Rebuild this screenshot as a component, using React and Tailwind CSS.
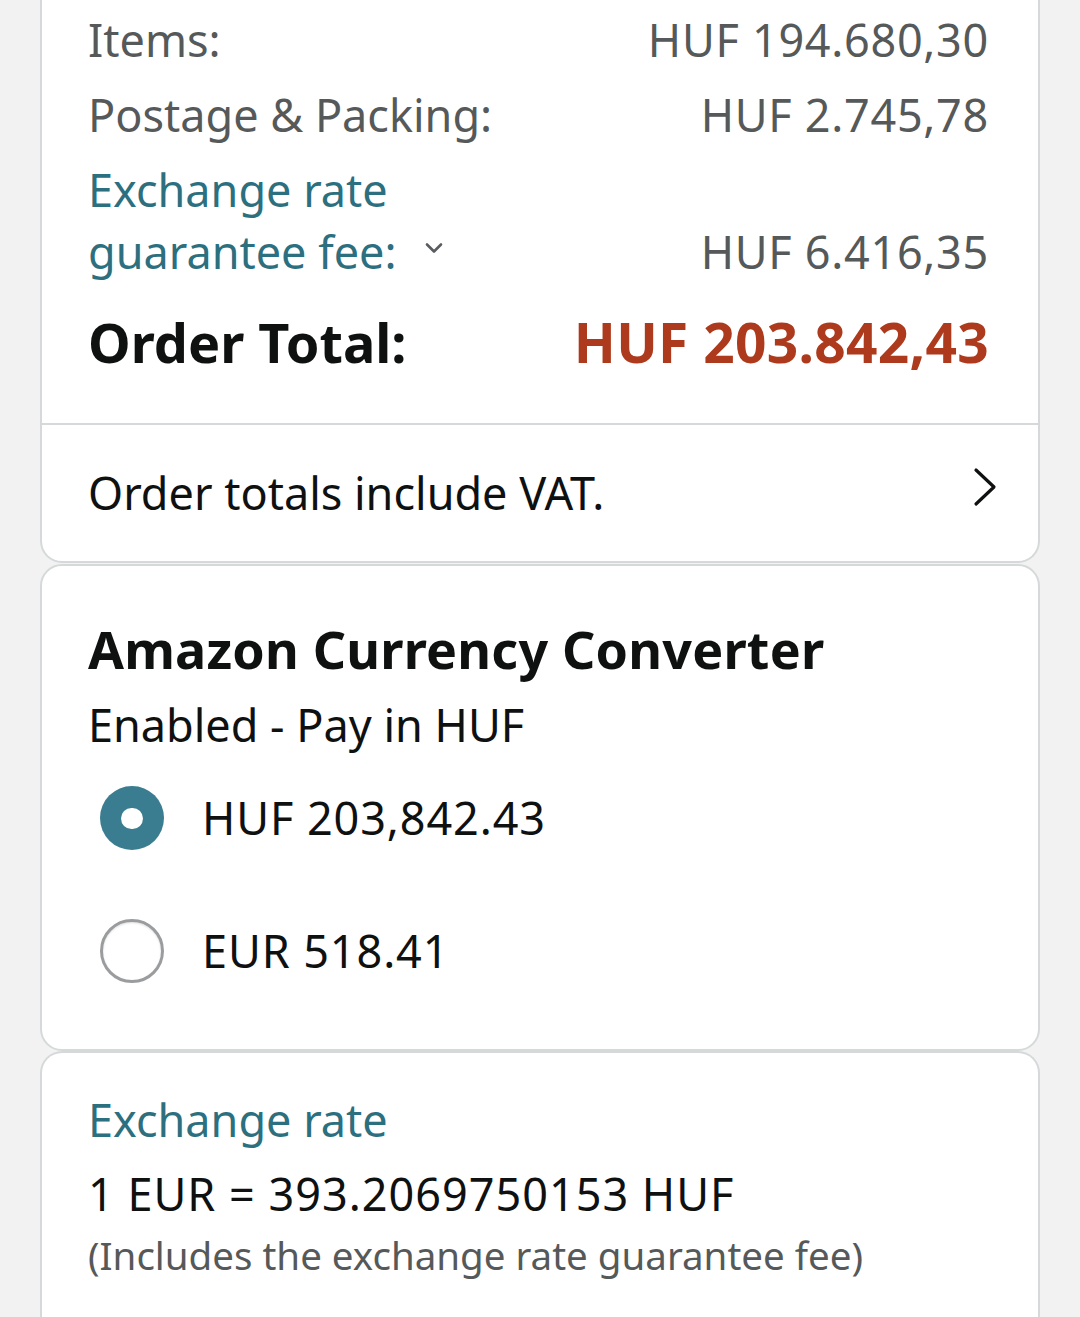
import React from "react";

const F = "font-['Noto_Sans',sans-serif]";

function Row({ label, value }) {
  return (
    <div className="flex items-end justify-between h-[62px] leading-[62px] text-[45px] text-[#565959]">
      <span>{label}</span>
      <span className="tracking-[0.7px]">{value}</span>
    </div>
  );
}

function Radio({ checked, label }) {
  return (
    <div className="flex items-center h-[64px]">
      <div className="w-[114px] pl-[12px] flex items-center">
        {checked ? (
          <div className="w-[64px] h-[64px] rounded-full bg-[#3a7d91] flex items-center justify-center">
            <div className="w-[22px] h-[21px] rounded-full bg-white" />
          </div>
        ) : (
          <div className="w-[64px] h-[64px] rounded-full border-[3px] border-[#9a9c9e] bg-white shadow-[inset_0_1px_2px_rgba(0,0,0,0.12)]" />
        )}
      </div>
      <span className="text-[45px] leading-[62px] text-[#0f1111] tracking-[0.9px]">{label}</span>
    </div>
  );
}

export default function App() {
  return (
    <div className={`${F} h-[1317px] overflow-hidden bg-[#f2f2f2] px-[40px]`}>
      {/* Card 1 */}
      <div className="bg-white border-x-2 border-b-2 border-[#d5d9d9] rounded-b-[22px]">
        <div className="pl-[46px] pr-[49px] pt-[9px] pb-[46px] flex flex-col">
          <Row label="Items:" value="HUF 194.680,30" />
          <div className="h-[13px]" />
          <Row label="Postage & Packing:" value="HUF 2.745,78" />
          <div className="h-[13px]" />
          <div className="flex items-end justify-between text-[45px] leading-[62px]">
            <div className="text-[#2c6f7f] flex flex-col">
              <span>Exchange rate</span>
              <span className="flex items-center">
                guarantee fee:
                <svg className="ml-[29px] -mt-[8px]" width="18" height="12" viewBox="0 0 18 12" fill="none">
                  <path d="M2 2.5 L9 9.5 L16 2.5" stroke="#5a5d5f" strokeWidth="2.6" strokeLinecap="round" strokeLinejoin="round" />
                </svg>
              </span>
            </div>
            <span className="text-[#565959] tracking-[0.7px]">HUF 6.416,35</span>
          </div>
          <div className="h-[24px]" />
          <div className="flex items-center justify-between h-[70px] font-bold">
            <span className="text-[54px] leading-[70px] text-[#0f1111]">Order Total:</span>
            <span className="text-[55px] leading-[70px] text-[#ad3a1c] tracking-[0.3px]">HUF 203.842,43</span>
          </div>
        </div>
        <div className="h-[2px] bg-[#d5d9d9]" />
        <div className="h-[136px] flex items-center justify-between pl-[46px] pr-[41px]">
          <span className="text-[45px] leading-[62px] text-[#0f1111]">Order totals include VAT.</span>
          <svg width="24" height="40" viewBox="0 0 24 40" fill="none" className="-mt-[12px]">
            <path d="M3 3 L21 20 L3 37" stroke="#0f1111" strokeWidth="3.2" strokeLinecap="round" strokeLinejoin="round" />
          </svg>
        </div>
      </div>

      {/* Card 2 */}
      <div className="mt-[1px] bg-white border-2 border-[#d5d9d9] rounded-[22px] pl-[46px] pr-[49px] pt-[50px] pb-[66px]">
        <div className="text-[52px] leading-[66px] font-bold text-[#0f1111] tracking-[0.2px]">Amazon Currency Converter</div>
        <div className="mt-[12px] text-[45px] leading-[62px] text-[#0f1111]">Enabled - Pay in HUF</div>
        <div className="mt-[30px] flex flex-col gap-[69px]">
          <Radio checked label="HUF 203,842.43" />
          <Radio label="EUR 518.41" />
        </div>
      </div>

      {/* Card 3 */}
      <div className="bg-white border-x-2 border-t-2 border-[#d5d9d9] rounded-t-[22px] pl-[46px] pr-[49px] pt-[36px] h-[400px]">
        <div className="text-[45px] leading-[62px] text-[#2c6f7f]">Exchange rate</div>
        <div className="mt-[12px] text-[45px] leading-[62px] text-[#0f1111] tracking-[1px]">1 EUR = 393.2069750153 HUF</div>
        <div className="mt-[4px] text-[38.5px] leading-[52px] text-[#565959]">(Includes the exchange rate guarantee fee)</div>
      </div>
    </div>
  );
}
